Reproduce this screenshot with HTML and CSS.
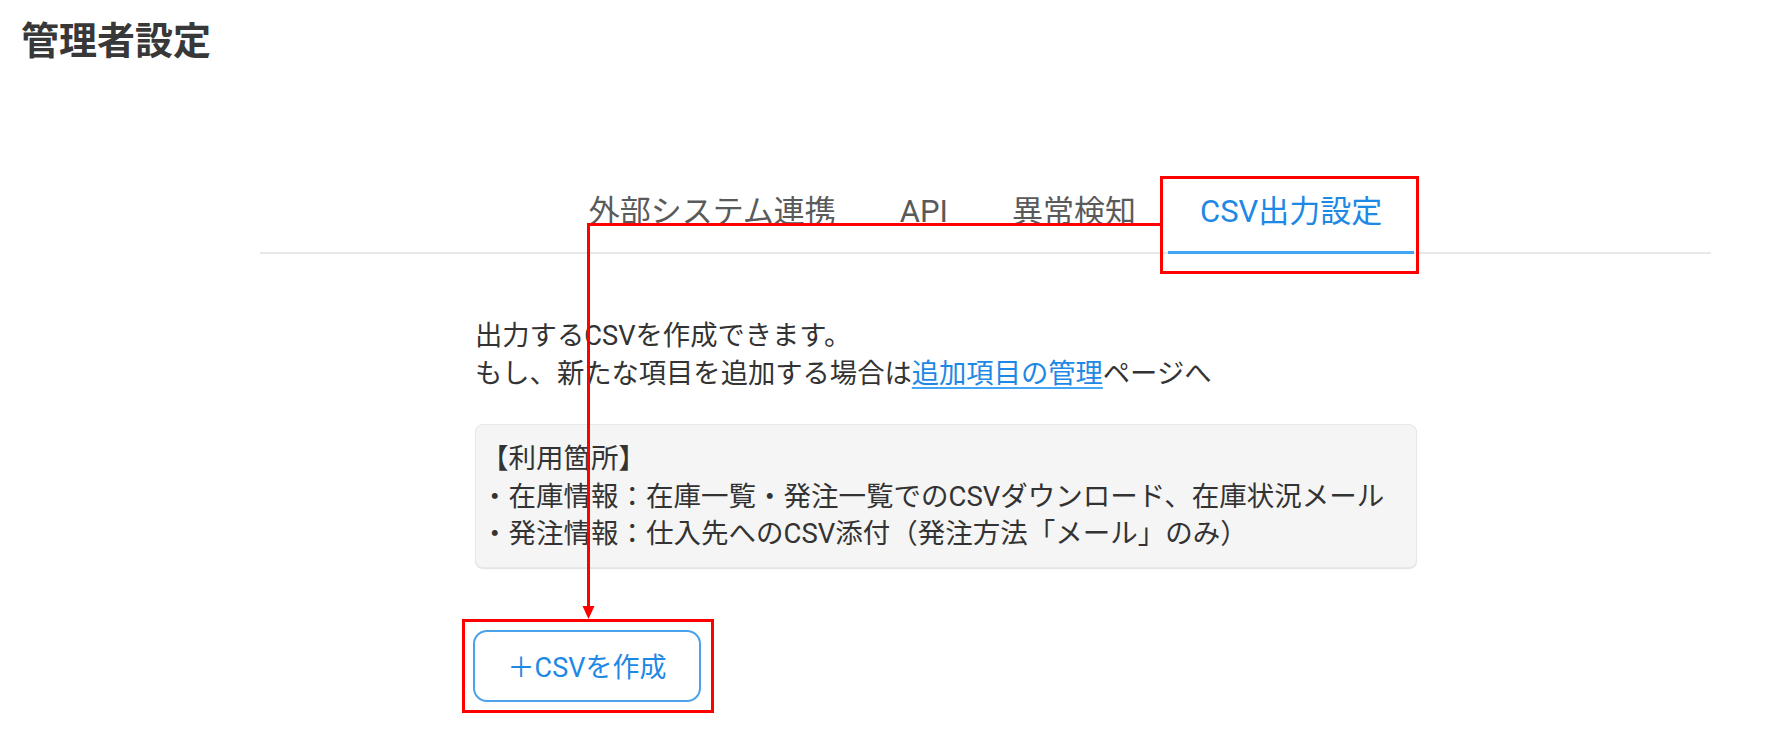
FILE: index.html
```html
<!DOCTYPE html>
<html lang="ja">
<head>
<meta charset="utf-8">
<title>管理者設定</title>
<link rel="stylesheet" href="styles.css">
</head>
<body>
<div class="page">
  <h1 class="title">管理者設定</h1>

  <nav class="tabs">
    <div class="tab">外部システム連携</div>
    <div class="tab">API</div>
    <div class="tab">異常検知</div>
    <div class="tab tab-active">CSV出力設定</div>
  </nav>

  <main class="content">
    <p class="desc">出力するCSVを作成できます。<br>もし、新たな項目を追加する場合は<a class="link" href="#">追加項目の管理</a>ページへ</p>

    <div class="info">
      <div class="info-line">【利用箇所】</div>
      <div class="info-line">・在庫情報：在庫一覧・発注一覧でのCSVダウンロード、在庫状況メール</div>
      <div class="info-line">・発注情報：仕入先へのCSV添付（発注方法「メール」のみ）</div>
    </div>

    <button class="create-btn" type="button">＋CSVを作成</button>
  </main>
</div>

<svg class="annotation" width="1771" height="734" viewBox="0 0 1771 734" aria-hidden="true">
  <rect x="1161.5" y="177.5" width="256" height="95" fill="none" stroke="#ff0000" stroke-width="3"/>
  <rect x="463.5" y="620.5" width="249" height="91" fill="none" stroke="#ff0000" stroke-width="3"/>
  <polyline points="1160,224.5 588.5,224.5 588.5,608" fill="none" stroke="#ff0000" stroke-width="3"/>
  <polygon points="582.5,606 594.5,606 588.5,619" fill="#ff0000"/>
</svg>
</body>
</html>
```

FILE: styles.css
```css
html, body {
  margin: 0;
  padding: 0;
  background: #ffffff;
}

body {
  position: relative;
  width: 1771px;
  height: 734px;
  overflow: hidden;
  font-family: Roboto, "Noto Sans CJK JP", "Noto Sans", sans-serif;
  color: #333333;
}

.page {
  padding-top: 16px;
}

.title {
  margin: 0;
  padding-left: 21px;
  font-size: 38px;
  line-height: 50px;
  font-weight: 700;
  color: #383838;
}

.tabs {
  display: flex;
  justify-content: center;
  margin: 126px 60px 0 260px;
  border-bottom: 2px solid #e8e8e8;
}

.tab {
  padding: 0 32px 19px;
  font-size: 31px;
  line-height: 40px;
  color: #5a5a5a;
  border-bottom: 3px solid transparent;
  margin-bottom: -2px;
  white-space: nowrap;
}

.tab-active {
  color: #1e88e5;
  border-bottom-color: #42a5f5;
}

.content {
  margin-left: 475px;
  width: 942px;
}

.desc {
  margin: 63px 0 0 0;
  font-size: 27.3px;
  line-height: 38px;
  color: #333333;
}

.link {
  color: #1e88e5;
  text-decoration: underline;
  text-decoration-color: #42a5f5;
  text-underline-offset: 4px;
}

.info {
  margin-top: 31px;
  box-sizing: border-box;
  width: 942px;
  padding: 15px 12px 14px 5px;
  background: #f5f5f5;
  border: 1px solid #e8e8e8;
  border-radius: 8px;
  box-shadow: 0 1px 1px rgba(0, 0, 0, 0.12);
}

.info-line {
  font-size: 27.5px;
  line-height: 37.5px;
  color: #333333;
  white-space: nowrap;
}

.create-btn {
  display: block;
  margin: 62px 0 0 -2px;
  width: 228px;
  height: 72px;
  box-sizing: border-box;
  background: #ffffff;
  border: 2px solid #4ca2ea;
  border-radius: 14px;
  font-family: Roboto, "Noto Sans CJK JP", "Noto Sans", sans-serif;
  font-size: 27px;
  color: #1e88e5;
  padding: 0;
  cursor: pointer;
}

.annotation {
  position: absolute;
  top: 0;
  left: 0;
  pointer-events: none;
}
```
